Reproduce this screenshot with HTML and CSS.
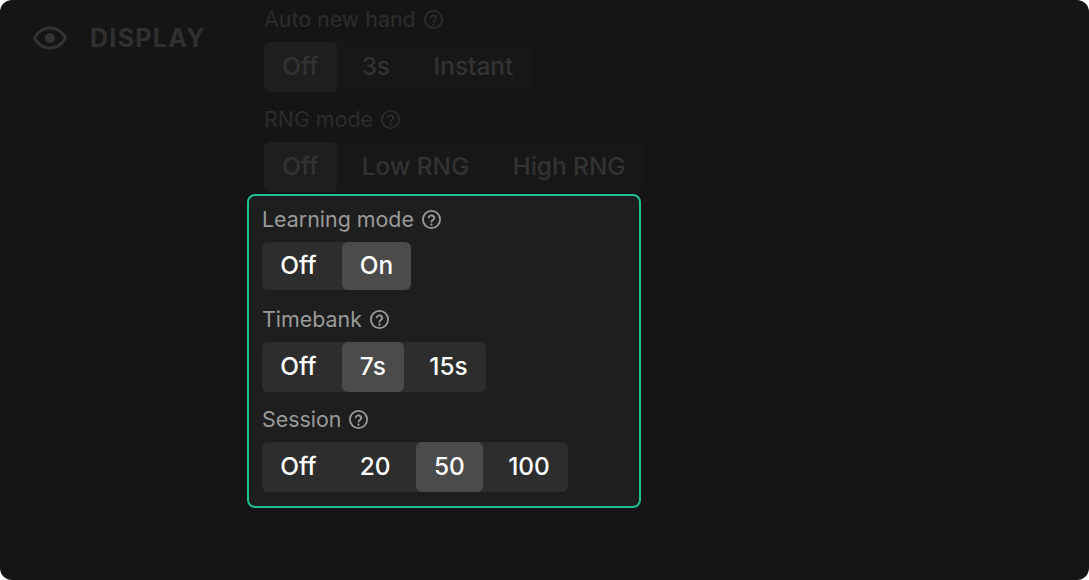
FILE: index.html
```html
<!DOCTYPE html>
<html lang="en">
<head>
<meta charset="utf-8">
<title>Display settings</title>
<link rel="stylesheet" href="styles.css">
</head>
<body>
<svg class="defs" width="0" height="0" aria-hidden="true">
  <symbol id="help" viewBox="0 0 20 20">
    <circle cx="10" cy="10" r="8.2" fill="none" stroke="currentColor" stroke-width="1.7"/>
    <path d="M7.300 8a2.800 2.800 0 0 1 5.400.6c0 1.900-2.700 2-2.700 3.600" fill="none" stroke="currentColor" stroke-width="1.7" stroke-linecap="round"/>
    <circle cx="10" cy="14.900" r="1.100" fill="currentColor"/>
  </symbol>
</svg>
<div class="app">
  <aside class="sidebar">
    <div class="side-head">
      <svg class="eye" viewBox="0 0 34 24" aria-hidden="true">
        <path d="M1.500 12C5 5.500 10.500 2 17 2s12 3.500 15.500 10C29 18.500 23.500 22 17 22S5 18.500 1.500 12Z" fill="none" stroke="currentColor" stroke-width="3"/>
        <circle cx="17" cy="12" r="5" fill="currentColor"/>
      </svg>
      <span class="side-title">DISPLAY</span>
    </div>
  </aside>
  <main class="main">
    <section class="setting dim">
      <div class="label">Auto new hand <svg class="help"><use href="#help"/></svg></div>
      <div class="group"><span class="opt on">Off</span><span class="opt">3s</span><span class="opt">Instant</span></div>
    </section>
    <section class="setting dim last">
      <div class="label">RNG mode <svg class="help"><use href="#help"/></svg></div>
      <div class="group"><span class="opt on">Off</span><span class="opt">Low RNG</span><span class="opt">High RNG</span></div>
    </section>
    <div class="panel">
      <section class="setting short">
        <div class="label">Learning mode <svg class="help"><use href="#help"/></svg></div>
        <div class="group"><span class="opt">Off</span><span class="opt on">On</span></div>
      </section>
      <section class="setting">
        <div class="label">Timebank <svg class="help"><use href="#help"/></svg></div>
        <div class="group"><span class="opt">Off</span><span class="opt on">7s</span><span class="opt">15s</span></div>
      </section>
      <section class="setting">
        <div class="label">Session <svg class="help"><use href="#help"/></svg></div>
        <div class="group"><span class="opt">Off</span><span class="opt">20</span><span class="opt on">50</span><span class="opt">100</span></div>
      </section>
    </div>
  </main>
</div>
</body>
</html>
```
FILE: styles.css
```css
* { box-sizing: border-box; }
html, body { margin: 0; height: 100%; background: #fff; overflow: hidden; }
.defs { display: block; position: absolute; }
.app {
  display: flex;
  width: 1089px;
  height: 580px;
  background: #151515;
  border-radius: 12px;
  overflow: hidden;
  font-family: Inter, "Liberation Sans", sans-serif;
}
.sidebar { width: 238px; flex: none; border-right: 1px solid #191919; }
.side-head {
  display: flex;
  align-items: center;
  gap: 23px;
  height: 77px;
  padding-left: 33px;
  border-bottom: 1px solid #191919;
  color: #333;
}
.eye { width: 34px; height: 24px; }
.side-title { font-size: 25px; font-weight: 700; letter-spacing: 1.3px; color: #303030; }
.main { flex: 1; padding: 8px 0 0 26px; }
.setting { margin-bottom: 16px; }
.setting.short { margin-bottom: 18px; }
.setting.short .group { height: 48px; }
.label {
  display: flex;
  align-items: center;
  gap: 7px;
  height: 24px;
  padding-bottom: 2px;
  margin-bottom: 10px;
  font-size: 21.4px;
  color: #9a9a9a;
  white-space: nowrap;
}
.help { width: 21px; height: 21px; color: #9a9a9a; }
.group {
  display: flex;
  width: fit-content;
  gap: 7px;
  height: 50px;
  border-radius: 6px;
  background: #2d2d2d;
}
.opt {
  display: flex;
  align-items: center;
  padding: 0 18.2px 2px;
  border-radius: 6px;
  font-size: 24.4px;
  font-weight: 450;
  color: #fff;
}
.opt.on { background: #4b4b4b; }
.dim .label, .dim .help { color: #2c2c2c; }
.dim .group { background: #171717; }
.dim .opt { color: #333; }
.dim .opt.on { background: #1e1e1e; }
.setting.last { margin-bottom: 2px; }
.panel {
  width: 394px;
  height: 314px;
  margin-left: -17px;
  padding: 12px 13px 0;
  border: 2px solid #1fbf94;
  border-radius: 8px;
  background: #1e1e1e;
}
```
